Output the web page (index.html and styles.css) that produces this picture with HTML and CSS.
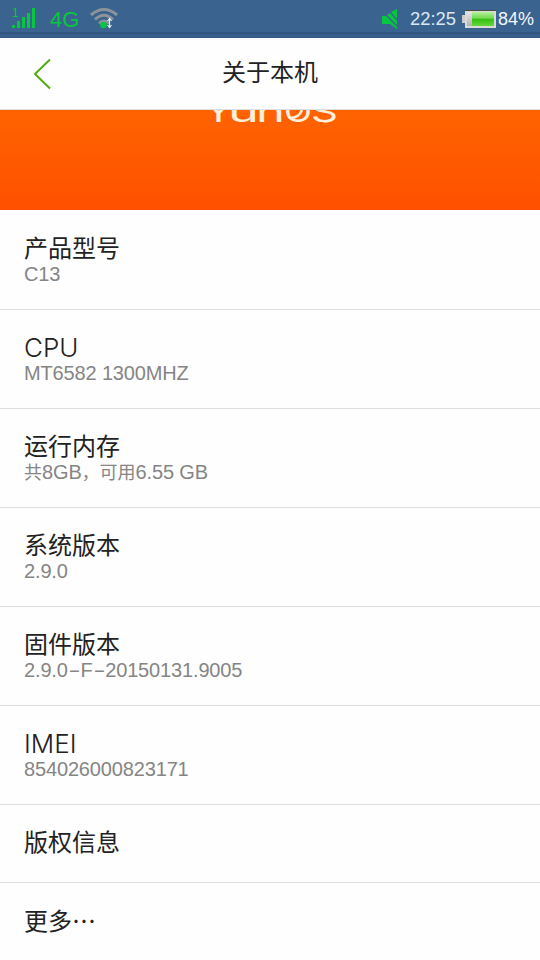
FILE: index.html
```html
<!DOCTYPE html>
<html lang="zh-CN">
<head>
<meta charset="utf-8">
<title>关于本机</title>
<link rel="stylesheet" href="styles.css">
</head>
<body>
<div class="status">
  <svg class="signal" width="24" height="24" viewBox="0 0 24 24" fill="#08c641"><rect x="0" y="18" width="3" height="3"/><rect x="5" y="14" width="3" height="7"/><rect x="10" y="10" width="3" height="11"/><rect x="15" y="6" width="3" height="15"/><rect x="20" y="1" width="3" height="20"/><text x="0" y="10" font-size="12">1</text></svg>
  <span class="net">4G</span>
  <svg class="wifi" width="28" height="24" viewBox="0 0 28 24" fill="none" stroke="#8d9499" stroke-width="3"><path d="M1 8Q14-3 27 8M5 12.500Q14 4 23 12.500M9 16.500Q14 11.500 19 16.500"/><circle cx="13.500" cy="18" r="3.300" fill="#08c641" stroke="none"/><path d="M19.500 12v8M17.500 14l2-2.500 2 2.500M17.500 18l2 2.500 2-2.500" stroke="#e6edf2" stroke-width="1.200"/></svg>
  <svg class="mute" width="16" height="20" viewBox="0 0 16 20" fill="#08c641"><path d="M0 7H4L15 18V20L8 15H0ZM5 6L8 4 15 12V16ZM9 3L15 0V10Z"/></svg>
  <span class="time">22:25</span>
  <svg class="battery" width="34" height="18" viewBox="0 0 34 18"><defs><linearGradient id="g" x2="0" y2="1"><stop stop-color="#b5ef9b"/><stop offset=".45" stop-color="#72d84e"/><stop offset=".5" stop-color="#35bd12"/><stop offset="1" stop-color="#64d83b"/></linearGradient><linearGradient id="s" x2="0" y2="1"><stop stop-color="#e5e5e5"/><stop offset="1" stop-color="#b2b2b2"/></linearGradient></defs><rect x="0" y="5" width="4" height="8" fill="#ccc"/><rect x="3" y="0" width="31" height="18" fill="#dadad6"/><path d="M3 .5H34" stroke="#4c4940"/><rect x="5" y="2" width="27" height="14" fill="url(#s)"/><rect x="10" y="2" width="22" height="14" fill="url(#g)"/></svg>
  <span class="pct">84%</span>
</div>
<header class="bar">
  <svg class="back" width="20" height="32" viewBox="0 0 20 32" fill="none" stroke="#54aa13" stroke-width="2"><path d="M17 1.500L2 16 17 30.500"/></svg>
  <h1>关于本机</h1>
</header>
<div class="banner">
  <svg width="140" height="20" viewBox="0 0 140 20"><g class="brand"><text x="2" y="12" textLength="29" lengthAdjust="spacingAndGlyphs">Y</text><text x="26" y="12" textLength="31" lengthAdjust="spacingAndGlyphs">u</text><text x="54" y="12" textLength="29" lengthAdjust="spacingAndGlyphs">n</text><text x="82" y="12" textLength="28" lengthAdjust="spacingAndGlyphs">O</text><text x="109" y="12" textLength="27" lengthAdjust="spacingAndGlyphs">S</text></g><path d="M88 8Q97 8 100 0" fill="none" stroke="#fff0dc" stroke-width="2.500"/></svg>
</div>
<main>
  <section class="row first"><h2>产品型号</h2><p>C13</p></section>
  <section class="row"><h2 class="latin">CPU</h2><p>MT6582 1300MHZ</p></section>
  <section class="row"><h2>运行内存</h2><p><span class="cn">共</span>8GB<span class="cn">，可用</span>6.55 GB</p></section>
  <section class="row"><h2>系统版本</h2><p>2.9.0</p></section>
  <section class="row"><h2>固件版本</h2><p>2.9.0<span class="dash">-</span>F<span class="dash">-</span>20150131.9005</p></section>
  <section class="row"><h2 class="latin">IMEI</h2><p>854026000823171</p></section>
  <section class="row short"><h2>版权信息</h2></section>
  <section class="row short last"><h2>更多<span class="dots">…</span></h2></section>
</main>
</body>
</html>
```
FILE: styles.css
```css
* { box-sizing: border-box; }
body { margin: 0; width: 540px; height: 960px; overflow: hidden; background: #fefefe; color: #222; font-family: "Liberation Sans", "Noto Sans CJK SC", sans-serif; }
h1, h2, p { margin: 0; font-weight: 400; }
.status { display: flex; height: 38px; padding-left: 12px; background: linear-gradient(#3a638f 0 32px, #31567f 32px 34px, #375d89 34px); line-height: 38px; color: #dce8f3; white-space: nowrap; }
.status svg { flex: none; }
.signal { margin-top: 7px; }
.net { width: 40px; padding-left: 14px; font-size: 22px; color: #08c641; line-height: 40px; }
.wifi { margin: 7px 0 0 14px; }
.mute { margin: 9px 0 0 264px; }
.time { width: 52px; margin-left: 12px; font-size: 18.400px; line-height: 38px; }
.battery { margin-top: 10px; }
.pct { margin-left: 2px; font-size: 18px; line-height: 38px; color: #f4f8fc; }
.bar { display: grid; grid-template-columns: 60px 1fr 60px; align-items: center; height: 72px; border-bottom: 1px solid #ddd; }
.back { margin-left: 33px; }
.bar h1 { font-size: 24px; line-height: 36px; text-align: center; margin-top: -1px; }
.banner { height: 100px; overflow: hidden; background: linear-gradient(#ff6300, #ff5000); }
.banner svg { display: block; margin-left: 202px; overflow: hidden; }
.brand { font: 400 29px Inter, sans-serif; fill: #fff0dc; }
.row { height: 99px; padding: 20px 24px 0; border-bottom: 1px solid #dedede; }
.first { height: 100px; padding-top: 21px; }
.row h2 { font-size: 24px; line-height: 36px; height: 33px; }
.row .latin { font: 300 26px/36px Inter, sans-serif; }
.row p { height: 20px; font-size: 20px; letter-spacing: -.15px; line-height: 20px; color: #858585; white-space: nowrap; }
.row .cn { font-size: 18px; letter-spacing: 0; }
.dash { display: inline-block; width: 12.700px; text-align: center; transform: scaleX(1.800); }
.row.short { height: 78px; }
.row.last { border-bottom: 0; padding-top: 19px; }
.dots { font-family: "Noto Sans CJK SC", sans-serif; }
```
